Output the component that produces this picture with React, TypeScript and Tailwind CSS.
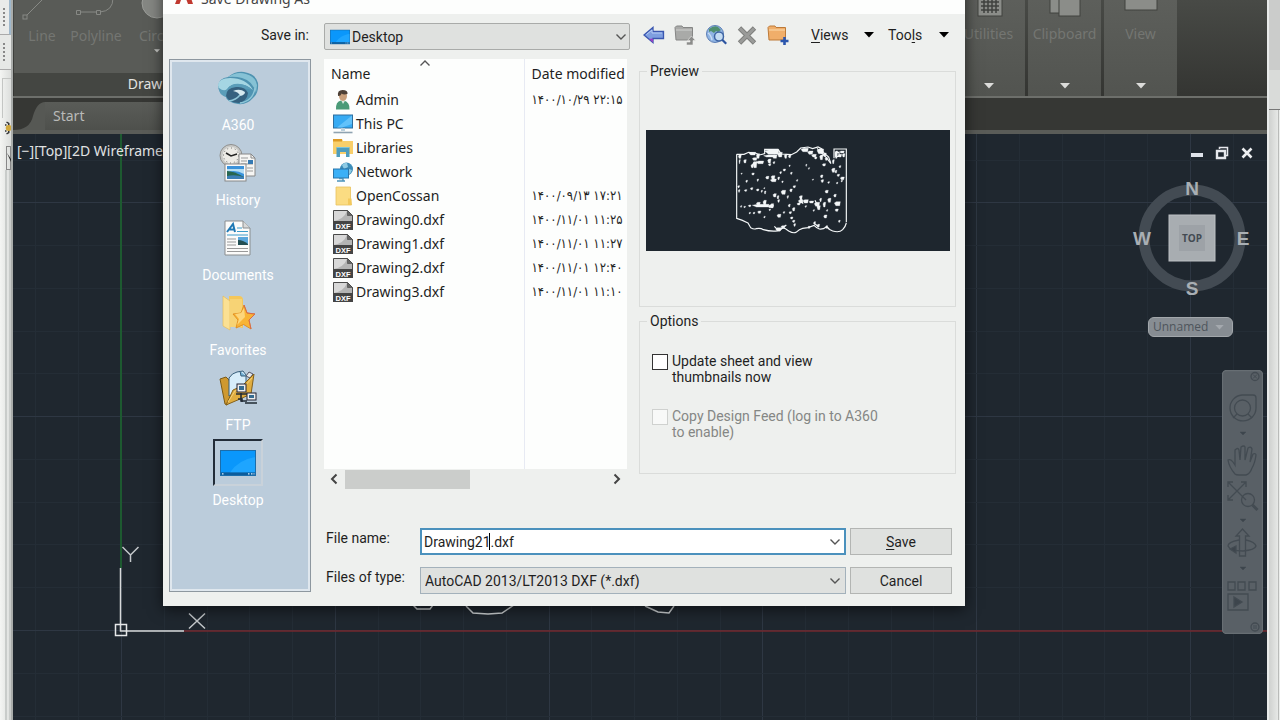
import { useState } from "react";
import type { ReactNode } from "react";

const UI = "font-[Roboto,'Liberation_Sans',sans-serif]";
const SEGOE = "font-['Noto_Sans','Open_Sans',sans-serif]";

/* ---------- small icons ---------- */

const Chevron = ({ className = "" }: { className?: string }) => (
  <svg viewBox="0 0 12 8" className={className} fill="none" stroke="#555" strokeWidth="1.4">
    <path d="M1.5 1.5 6 6l4.5-4.5" />
  </svg>
);

const DownArrow = ({ className = "" }: { className?: string }) => (
  <svg viewBox="0 0 10 6" className={className} fill="currentColor">
    <path d="M0 0h10L5 5.5z" />
  </svg>
);

const DesktopIcon = ({ className = "" }: { className?: string }) => (
  <svg viewBox="0 0 36 26" className={className}>
    <rect width="36" height="26" fill="#1b6dab" />
    <rect x="1" y="1" width="34" height="21.5" fill="#0a97fb" />
    <path d="M35 1v21.500H10Q18 10 35 7z" fill="#1ea5ff" />
    <rect x="1" y="22.500" width="34" height="2.500" fill="#0b5c9c" />
    <path d="M2 23.800h1.500M28 23.800h1.500M31 23.800h1.500M33.500 23.800h1" stroke="#d9f0ff" strokeWidth="1.300" />
  </svg>
);

const BackIcon = () => (
  <svg viewBox="0 0 22 22" className="size-[22px]">
    <path d="M1 11 10 3.500v4h10.500v7H10v4z" fill="#7f9fe0" stroke="#3b57b0" strokeWidth="1.300" />
    <path d="M3.500 10.500 9 6v3h10" fill="none" stroke="#b8cdf5" />
    <path d="m6 15 4 3.500v-4" fill="#9b3fc4" />
  </svg>
);

const UpFolderIcon = () => (
  <svg viewBox="0 0 22 22" className="size-[22px]">
    <path d="M1 3.500 2.500 2H8l1 1.500h9.500V16H2z" fill="#a9aaa8" stroke="#858685" />
    <path d="M2 6h16" stroke="#d0d1cf" />
    <path d="M12.500 21h6.500v-4.500h2.500L17.500 12l-4 4.500H16V18h-3.500z" fill="#8b8c8a" stroke="#efefed" strokeWidth=".6" />
  </svg>
);

const WebIcon = () => (
  <svg viewBox="0 0 22 22" className="size-[22px]">
    <circle cx="10" cy="10" r="8.500" fill="#8fb4e3" stroke="#5d7fb6" />
    <path d="M4 5q5-4 9-2l3 3-3 2-2-1-2 2-3-2-2 1z" fill="#4f8f6f" />
    <path d="M3 9q3 2 4 7" stroke="#c9dcf3" fill="none" strokeWidth="1.500" />
    <circle cx="14" cy="12.500" r="4.500" fill="#c4dcf2" stroke="#3e64a3" strokeWidth="1.500" />
    <path d="m17.200 15.800 4 4" stroke="#2d55a0" strokeWidth="2.200" />
  </svg>
);

const DeleteIcon = () => (
  <svg viewBox="0 0 22 22" className="size-[22px]">
    <path d="m3.500 4 15 15M18.500 4l-15 15" stroke="#7d7e7c" strokeWidth="4.800" />
    <path d="m4 4.500 14 14M18 4.500l-14 14" stroke="#9a9b99" strokeWidth="3" />
  </svg>
);

const NewFolderIcon = () => (
  <svg viewBox="0 0 22 22" className="size-[22px]">
    <path d="M1 3.500 2.500 2H8l1 1.500h9.500V16H2z" fill="#f0ae6a" stroke="#bd7a38" />
    <path d="M2 6h16" stroke="#fbdcae" />
    <path d="M17.500 13v8M13.500 17h8" stroke="#2b56ad" strokeWidth="2.600" />
  </svg>
);

const UserIcon = () => (
  <svg viewBox="0 0 20 20" className="size-5">
    <path d="M3 19.500q-.5-8 5-9h3q6 2 5.500 9z" fill="#4b9b78" />
    <path d="m8 10 2 4 2.500-4z" fill="#d9ebe2" />
    <ellipse cx="10" cy="6" rx="4" ry="5" fill="#c89f7b" />
    <path d="M5 6Q4 0 9.500 0 15 0 14.500 4q-4 1-6-.5Q8 6 5 6z" fill="#4d4036" />
  </svg>
);

const PcIcon = () => (
  <svg viewBox="0 0 20 20" className="size-5">
    <rect x=".5" y="1" width="19" height="13" fill="#37abf3" stroke="#2e6f9f" />
    <path d="M19 1.500V10L9 13.500H4z" fill="#62c2fa" />
    <path d="M8 14h4v3H8z" fill="#bcd0dc" />
    <path d="M.5 18.500h19" stroke="#8fa3b1" strokeWidth="1.600" />
  </svg>
);

const LibraryIcon = () => (
  <svg viewBox="0 0 20 20" className="size-5">
    <path d="M0 1h9l1 2h10v13H0z" fill="#f9cf6a" />
    <path d="M0 1h9v2.500H0z" fill="#dd9a24" />
    <path d="M3.500 19V9.500h13V19H13v-5H7v5z" fill="#4f9dbd" />
    <path d="M3.500 9.500h13" stroke="#7cc4dd" />
  </svg>
);

const NetworkIcon = () => (
  <svg viewBox="0 0 20 20" className="size-5">
    <circle cx="13.500" cy="7" r="6.500" fill="#3c8db8" />
    <path d="M9 3q3-3 5-2l1 4-4 2zM16 7l3 1-2 4-2-1z" fill="#8ecbe4" />
    <rect x=".5" y="7" width="15" height="9" fill="#3bb0f7" stroke="#2a76ac" />
    <path d="M6 16.500h4V19H4M10 19h2" stroke="#4a92bb" fill="none" strokeWidth="1.400" />
  </svg>
);

const FolderIcon = () => (
  <svg viewBox="0 0 20 20" className="size-5">
    <path d="M3 1h14.500v12l1 6H3z" fill="#fbdc82" stroke="#e9c25d" strokeWidth=".8" />
    <path d="M15 12.500h3.500V19H15z" fill="#f3c95c" />
  </svg>
);

const DxfIcon = () => (
  <svg viewBox="0 0 20 20" className="size-5">
    <path d="M.5.5h14l5 5V19.500H.5z" fill="#b4b4b4" stroke="#4a4a4a" />
    <path d="M1 11Q11 9 14 1H1z" fill="#d8d8d8" />
    <path d="M14.500.5v5h5z" fill="#666" stroke="#444" strokeWidth=".6" />
    <rect y="11" width="20" height="9" fill="#444" />
    <text x="10" y="18.500" fontSize="7.500" fontWeight="bold" textAnchor="middle" fill="#fff" fontFamily="Liberation Sans, sans-serif">
      DXF
    </text>
  </svg>
);

/* ---------- places bar icons ---------- */

const A360Icon = () => (
  <svg viewBox="0 0 42 34" className="h-[34px] w-[42px]">
    <path d="M1 15Q2 7 11 6 18 0 27 1q12 2 14 11 1 10-5 15-6 7-15 6-11-1-13-9-7-3-7-9z" fill="#4f93b1" />
    <path d="M11 6q9-6 18-3 10 3 11 11l-1 8Q36 10 25 7q-7-2-14-1z" fill="#86c2d5" />
    <path d="M1 14q1-7 12-7 16 0 23 12-8-7-17-6-9 1-10 9-8-2-8-8z" fill="#a5d6e3" />
    <path d="M2 17q5 4 8 1 5-6 13-5 8 1 12 6-5-2-11-1-12 2-13 9-10-3-9-10z" fill="#5a9db9" />
    <path d="M9 25q0-8 10-9 9-1 12 6-1 8-9 10-10 0-13-7z" fill="#35617f" />
    <path d="M16 20q7-3 12 1 0 3-5 4-1-4-7-5z" fill="#d6e9ef" />
    <path d="M23 32q13-2 15-15M12 30q7-1 11-6" stroke="#8fc6d8" fill="none" strokeWidth="1.500" />
  </svg>
);

const HistoryIcon = () => (
  <svg viewBox="0 0 38 38" className="size-[38px]">
    <circle cx="12" cy="11.500" r="11" fill="#c8c9c7" stroke="#8e8f8d" />
    <circle cx="12" cy="11.500" r="8.500" fill="#ecebe6" />
    <circle cx="12" cy="11.500" r="7.500" fill="none" stroke="#666" strokeDasharray="1 2.900" />
    <path d="m7 9 5 3 6-2" stroke="#222" fill="none" strokeWidth="1.500" />
    <path d="M20 10h12l4 4v18H20z" fill="#f6f6f4" stroke="#888" />
    <path d="M32 10v4h4" fill="none" stroke="#888" />
    <path d="M22 14h7M22 17h6M22 20h12M28 24h6M28 27h6" stroke="#999" />
    <rect x="29" y="16" width="5" height="4" fill="#3479b3" />
    <rect x="6" y="20" width="21" height="17" fill="#fafafa" stroke="#888" />
    <rect x="8" y="22" width="17" height="13" fill="#3a92da" />
    <path d="M8 28q9-3 17 2v-5H8z" fill="#b6def3" />
    <path d="M8 27q7 0 17 6v2H8z" fill="#28664f" />
    <path d="M8 32q8-2 17 1v2H8z" fill="#3d7fb6" />
  </svg>
);

const DocumentsIcon = () => (
  <svg viewBox="0 0 28 36" className="h-9 w-7">
    <path d="M1 1h18l7 7v27H1z" fill="#fbfbfa" stroke="#8a8d8f" />
    <path d="M19 1v7h7" fill="#d8d9d9" stroke="#8a8d8f" />
    <path d="m3 12 6-8 2 8M5.500 9.500H10" fill="none" stroke="#1f78b4" strokeWidth="2" />
    <path d="M13 8h5M13 11.500h11M3 15h21" stroke="#3d9cc9" strokeWidth="1.200" />
    <path d="M3 19h9M3 22h9M3 25h9M3 28.500h21M3 31.500h21" stroke="#999" />
    <rect x="14" y="17" width="10" height="8" fill="#5aa7dc" />
    <path d="M14 20q5 0 10 4v1H14z" fill="#234f53" />
  </svg>
);

const FavoritesIcon = () => (
  <svg viewBox="0 0 34 38" className="h-[38px] w-[34px]">
    <path d="M2 2h16q4 0 4 4v28L8 32V2z" fill="#f5c75a" />
    <path d="m2 2 7 5v29l-7-4z" fill="#fbe093" stroke="#e7b94f" strokeWidth=".6" />
    <path d="M9 5h12v28H9z" fill="#f7d375" />
    <path d="m23 11 3 8 8 1-6 6 2 9-7.500-4.500L15 34l2-8-5-6 8-1z" fill="#f8b435" stroke="#dd8516" strokeWidth=".8" />
    <path d="m23 14 1 9-8 8 2-6-4-5 6-1z" fill="#fdd67b" />
    <path d="M23 11 26 19l8 1-6 6 2 9" fill="none" stroke="#d9694b" strokeWidth="1" />
  </svg>
);

const FtpIcon = () => (
  <svg viewBox="0 0 38 36" className="h-9 w-[38px]">
    <path d="M1 9 7 7l3 3 5 14-7 11-2-1z" fill="#cf9930" stroke="#7b5a18" />
    <path d="M10 8q3-5 8-6l6-1 3 4v14l-17 7z" fill="#d7edfa" stroke="#365e7a" />
    <path d="m21 1 1 5h5" fill="#74b1d6" stroke="#365e7a" />
    <path d="m27 6 3-4 4 2-3 4z" fill="#e3e7e7" stroke="#556" />
    <path d="m7 35 7-15 9-4 12-12-3 20-11 5z" fill="#e0ad40" stroke="#84601a" />
    <path d="m9 32 7-11 9-4 8-9" stroke="#f4d07a" fill="none" />
    <rect x="18" y="14" width="9" height="8" fill="#eee" stroke="#223" />
    <rect x="20" y="16" width="5" height="4" fill="#356b91" />
    <rect x="28" y="23" width="9" height="7" fill="#eee" stroke="#223" />
    <rect x="30" y="25" width="5" height="3" fill="#356b91" />
    <path d="M22 23v8h6M17 24h11M26 33h12M19 29h4v3" stroke="#222b35" fill="none" strokeWidth="1.600" />
  </svg>
);

/* ---------- data ---------- */

const places: { label: string; icon: ReactNode }[] = [
  { label: "A360", icon: <A360Icon /> },
  { label: "History", icon: <HistoryIcon /> },
  { label: "Documents", icon: <DocumentsIcon /> },
  { label: "Favorites", icon: <FavoritesIcon /> },
  { label: "FTP", icon: <FtpIcon /> },
  { label: "Desktop", icon: <DesktopIcon className="h-[26px] w-9" /> },
];

const files: { name: string; date: string; icon: ReactNode }[] = [
  { name: "Admin", date: "۱۴۰۰/۱۰/۲۹ ۲۲:۱۵", icon: <UserIcon /> },
  { name: "This PC", date: "", icon: <PcIcon /> },
  { name: "Libraries", date: "", icon: <LibraryIcon /> },
  { name: "Network", date: "", icon: <NetworkIcon /> },
  { name: "OpenCossan", date: "۱۴۰۰/۰۹/۱۳ ۱۷:۲۱", icon: <FolderIcon /> },
  { name: "Drawing0.dxf", date: "۱۴۰۰/۱۱/۰۱ ۱۱:۲۵", icon: <DxfIcon /> },
  { name: "Drawing1.dxf", date: "۱۴۰۰/۱۱/۰۱ ۱۱:۲۷", icon: <DxfIcon /> },
  { name: "Drawing2.dxf", date: "۱۴۰۰/۱۱/۰۱ ۱۲:۴۰", icon: <DxfIcon /> },
  { name: "Drawing3.dxf", date: "۱۴۰۰/۱۱/۰۱ ۱۱:۱۰", icon: <DxfIcon /> },
];

// x, y, width, height of the loose fragments in the thumbnail
const specks = [
  [296, 104, 9, 10], [298, 118, 4, 12], [312, 118, 8, 10], [328, 96, 20, 8], [350, 100, 10, 14], [338, 112, 14, 8],
  [340, 124, 12, 18], [350, 122, 22, 8], [334, 132, 8, 10], [376, 88, 42, 14], [372, 104, 34, 6], [384, 116, 10, 12],
  [398, 104, 14, 10], [386, 130, 8, 6], [400, 124, 6, 6], [414, 96, 14, 14], [434, 102, 8, 12], [446, 104, 8, 8],
  [484, 84, 22, 10], [504, 92, 16, 10], [516, 102, 14, 8], [532, 86, 20, 14], [540, 104, 10, 14], [550, 98, 10, 10],
  [556, 112, 8, 8], [548, 130, 10, 7], [524, 110, 8, 6], [586, 92, 8, 22], [600, 92, 14, 6], [596, 102, 10, 8],
  [608, 100, 8, 10], [578, 118, 6, 12], [576, 144, 10, 12], [586, 150, 6, 8], [598, 136, 6, 6], [602, 170, 12, 8],
  [592, 162, 8, 6], [336, 158, 8, 6], [352, 176, 5, 7], [378, 168, 10, 8], [394, 166, 12, 10], [392, 176, 18, 8],
  [414, 170, 6, 8], [420, 154, 6, 6], [430, 146, 8, 6], [452, 156, 6, 6], [448, 134, 4, 5], [498, 132, 4, 6],
  [506, 142, 4, 5], [426, 182, 5, 5], [470, 178, 5, 5], [518, 176, 4, 4], [542, 164, 8, 8], [544, 178, 8, 8],
  [564, 184, 6, 5], [590, 186, 5, 5], [604, 180, 5, 5], [304, 158, 4, 4], [318, 180, 6, 6], [294, 196, 6, 6],
  [296, 208, 5, 8], [314, 208, 8, 5], [332, 202, 8, 6], [350, 206, 8, 6], [364, 210, 5, 6], [374, 212, 5, 9],
  [460, 196, 8, 6], [450, 206, 8, 8], [424, 210, 14, 12], [400, 220, 10, 10], [412, 226, 6, 10], [442, 226, 5, 8],
  [372, 202, 4, 4], [480, 226, 8, 12], [476, 238, 14, 10], [490, 238, 16, 10], [508, 242, 14, 6], [472, 248, 10, 6],
  [524, 246, 16, 12], [532, 256, 10, 12], [540, 234, 6, 10], [550, 246, 8, 14], [556, 210, 10, 8], [564, 234, 10, 12],
  [582, 222, 8, 8], [584, 244, 18, 12], [586, 266, 10, 7], [338, 252, 50, 8], [350, 246, 12, 8], [370, 240, 10, 14],
  [384, 254, 18, 8], [392, 250, 10, 12], [302, 256, 5, 5], [312, 258, 6, 4], [326, 254, 8, 5], [354, 272, 10, 7],
  [340, 276, 6, 5], [372, 288, 5, 5], [388, 266, 5, 5], [328, 276, 5, 5], [414, 238, 6, 8], [412, 282, 12, 9],
  [446, 252, 6, 8], [458, 262, 8, 10], [448, 274, 8, 6], [430, 274, 6, 5], [452, 290, 8, 6], [458, 300, 8, 6],
  [462, 310, 6, 8], [552, 284, 10, 9], [560, 268, 5, 5], [596, 300, 6, 6], [522, 304, 6, 8], [532, 312, 8, 8],
  [504, 318, 8, 6], [408, 322, 16, 10], [424, 316, 12, 8], [558, 316, 6, 8], [520, 268, 5, 5], [496, 256, 5, 5],
];

const Thumbnail = () => (
  <svg viewBox="19 29 912 363" className="w-full bg-[#1e262e]" fill="none" stroke="#f4f7f8" strokeWidth="3.500">
    <path d="M291 102h22l14-6 20 2 12 6 16-4v-13h40l10 14 30 2 16-8 12-12 22-3 14 5 16-5 12 6 4 10 16 14 6 18M583 114V86h37v220" />
    <path d="M291 102v192q14 4 34 14l8 14q10 6 16 3 14-3 22 3 20 6 42 4l16-10q8 2 18 10 14 8 22 4 10-10 20-12l16-2 18-7q8 8 16 11 10 2 22-7 8 10 18 13 20 6 30-4 8-8 11-20" />
    <path d="m404 318 14 14 22-18M522 308l16 12M560 318l8 8M374 92h36M344 124l-8 16M532 84l18 18 10 10 14 18M480 228l10 22M526 240l12 26M588 96h10v12h-10z" />
    {specks.map(([x, y, w, h], i) => (
      <path
        key={i}
        strokeWidth="1"
        fill="#f4f7f8"
        d={`M${x} ${y + h / 3}L${x + w / 3} ${y}H${x + w}L${x + w - 2} ${y + h}H${x + w / 4}z`}
      />
    ))}
  </svg>
);

/* ---------- drawing area ---------- */

const ModelSpace = () => (
  <svg className="absolute inset-0 size-full" fill="none">
    <g transform="translate(-13 -134)">
      {Array.from({ length: 31 }, (_, i) => {
        const x = Math.round(121 + (i - 2) * 42.76) + 0.5;
        const major = (i - 2) % 5 === 0;
        return <path key={`v${i}`} d={`M${x} 134V900`} stroke={major ? "#2e3743" : "#242d36"} />;
      })}
      {Array.from({ length: 18 }, (_, i) => {
        const y = Math.round(630 + (i - 11) * 42.76) + 0.5;
        const major = (i - 11) % 5 === 0;
        return <path key={`h${i}`} d={`M13 ${y}H1900`} stroke={major ? "#2e3743" : "#242d36"} />;
      })}
      <path d="M121 134v434" stroke="#1d5a30" strokeWidth="2" />
      <path d="M184 631h1700" stroke="#73282e" strokeWidth="1.500" />
      <path d="M120.500 568v63H184" stroke="#d8dadb" strokeWidth="1.500" />
      <rect x="115.500" y="624.500" width="11" height="11" stroke="#e6e8e9" strokeWidth="1.500" />
      <path d="m122.500 547 8 8 8-8M130.500 555v7M189 613.500l16 15M205 613.500l-16 15" stroke="#c4c8cb" strokeWidth="1.500" />
      <path d="M413 605l4 4h13l3-4M466 606l7 7 15 1 14-1 12-8M645 606l13 6 11 1 5-7" stroke="#cfd3d5" strokeWidth="1.500" />
    </g>
  </svg>
);

const ViewCube = () => (
  <svg viewBox="0 0 120 126" className="h-[126px] w-[120px]" fontFamily="Liberation Sans, sans-serif" fontWeight="bold" textAnchor="middle">
    <circle cx="60" cy="63" r="48" fill="none" stroke="#434b53" strokeWidth="11" />
    <rect x="37" y="40" width="46" height="46" fill="#a8adb1" stroke="#bcc0c3" />
    <rect x="47" y="50" width="26" height="26" fill="#9da2a7" />
    <text x="60" y="67" fontSize="10" fill="#434a52" fontFamily="Open Sans, sans-serif">TOP</text>
    <g fontSize="19" fill="#a9afb4">
      <text x="60" y="20">N</text>
      <text x="60" y="120">S</text>
      <text x="10" y="70">W</text>
      <text x="111" y="70">E</text>
    </g>
  </svg>
);

const NavigationBar = () => (
  <svg viewBox="0 0 41 264" className="h-[264px] w-[41px]" fill="none" stroke="#434b52" strokeWidth="1.300">
    <rect x=".5" y=".5" width="40" height="263" rx="4" fill="#596066" stroke="#676e73" />
    <circle cx="33" cy="6.500" r="4" />
    <path d="m31 4.500 4 4m0-4-4 4" strokeWidth="1" />
    <path d="M20 25h11q3 0 3 3v10a13 13 0 1 1-14-13z" />
    <circle cx="20.500" cy="38" r="8" />
    <path d="m11 48 4-4M30 48l-4-4" />
    <path d="M18 62h6l-3 3zM18 149h6l-3 3zM18 197h6l-3 3z" fill="#3d454c" strokeWidth=".5" />
    <path d="M13 104Q7 97 6 90q3-2 7 5V80q3-3 4 0l1 10 1-13q3-2 4 0v13l3-12q3-2 4 1l-2 13 3-8q3-1 3 1-1 8-4 13-2 6-6 7h-7q-3 0-4-1z" />
    <path d="m6 112 18 18M24 112 6 130M6 117v-5h5M19 112h5v5M6 125v5h5" />
    <circle cx="26" cy="130" r="6.500" />
    <path d="m30.500 135 5 5" strokeWidth="3" />
    <path d="M17.500 186v-20H14l6.500-7 6.500 7h-3.500v20z" />
    <path d="M17 170q-11 2-11 6 2 5 15 5 12-1 13-5-1-4-10-6" />
    <path d="m8 179 6-3v7z" fill="#3d454c" />
    <path d="M6 212h7v8H6zM16 212h7v8h-7zM27 212h7v8h-7zM6 224h20v16H6z" />
    <path d="m12 227 8 5-8 5z" fill="#3d454c" />
    <circle cx="33" cy="257" r="4" />
    <path d="M31 256h4M31 258h4" strokeWidth="1" />
  </svg>
);

/* ---------- ribbon ---------- */

const RibbonPanel = ({ label, children }: { label: string; children: ReactNode }) => (
  <button className="flex w-[73px] flex-col items-center overflow-hidden bg-linear-to-b from-[#5d5f5b] to-[#525450] text-[#747672]">
    <svg viewBox="0 0 40 24" className="h-6 w-10" fill="#8b8d89" stroke="#40423f">
      {children}
    </svg>
    <span className={`${SEGOE} text-sm leading-5`}>{label}</span>
    <DownArrow className="mt-auto mb-[7px] h-[6px] w-[10px] text-[#dcdcda]" />
  </button>
);

const Ribbon = () => (
  <div className="flex h-[98px] shrink-0 gap-[3px] border-b-2 border-[#6d6f6b] bg-linear-to-b from-[#484a46] to-[#343532] pl-px">
    <div className="flex w-[262px] flex-col bg-[#595b57] text-[#747672]">
      <div className="flex grow pl-2">
        <button className="flex w-10 flex-col items-center">
          <svg viewBox="0 0 40 26" className="h-[26px] w-10" fill="none" stroke="#878985">
            <path d="M4 16 22-2" />
            <rect x="1" y="15" width="4" height="4" fill="#595b57" />
          </svg>
          <span className={`${SEGOE} text-sm leading-5`}>Line</span>
        </button>
        <button className="flex w-[68px] flex-col items-center">
          <svg viewBox="0 0 68 26" className="h-[26px] w-[68px]" fill="none" stroke="#878985">
            <path d="M16 12h22q13-1 13-14" />
            <path d="M14.500 10.500h4v4h-4zM34.500 10.500h4v4h-4z" fill="#595b57" />
          </svg>
          <span className={`${SEGOE} text-sm leading-5`}>Polyline</span>
        </button>
        <button className="flex w-[54px] flex-col items-center">
          <svg viewBox="0 0 54 26" className="h-[26px] w-[54px]" fill="#858783" stroke="#9b9d99">
            <circle cx="27" cy="3" r="15" />
          </svg>
          <span className={`${SEGOE} text-sm leading-5`}>Circle</span>
          <DownArrow className="mt-[3px] h-1 w-[6px] text-[#c4c5c2]" />
        </button>
      </div>
      <div className={`${SEGOE} h-[23px] bg-[#444642] text-center text-sm leading-[22px] text-[#e3e3e1]`}>Draw</div>
    </div>
    <div className="grow bg-[#595b57]" />
    <RibbonPanel label="Utilities">
      <rect x="9" y="-6" width="24" height="22" />
      <path d="M12 2h18M12 6h18M12 10h18M15 0v13M19 0v13M23 0v13M27 0v13" strokeWidth="1.500" />
    </RibbonPanel>
    <RibbonPanel label="Clipboard">
      <rect x="5" y="-6" width="14" height="19" />
      <rect x="14" y="-6" width="21" height="22" />
    </RibbonPanel>
    <RibbonPanel label="View">
      <rect x="4" y="-6" width="32" height="16" />
    </RibbonPanel>
    <div className="w-[87px]" />
  </div>
);

const DocumentTabs = () => (
  <div className="flex h-9 shrink-0 items-end border-b-4 border-[#5a5c58] bg-[#363734]">
    <svg viewBox="0 0 32 28" className="h-7 w-8">
      <path d="M0 28Q17 28 20 14 24 0 32 0v28z" fill="#565854" />
    </svg>
    <button className={`${SEGOE} h-7 w-[400px] rounded-tr-lg bg-linear-to-b from-[#5a5c58] to-[#4e504c] pl-2 text-left text-sm text-[#b9bab8]`}>
      Start
    </button>
  </div>
);

/* ---------- save dialog ---------- */

const SaveDialog = () => {
  const [fileName, setFileName] = useState("Drawing21.dxf");
  const [update, setUpdate] = useState(false);

  return (
    <div
      role="dialog"
      aria-labelledby="dialog-title"
      className={`${UI} absolute -top-6 left-[163px] flex w-[802px] flex-col bg-[#eef0ee] pb-3 text-sm text-[#1f1f1f] shadow-[0_3px_14px_rgba(0,0,0,0.6)]`}
    >
      <div className="flex h-[38px] items-center gap-2 bg-[#fdfefd] px-3">
        <svg viewBox="0 0 18 18" className="size-[18px]">
          <path d="M0 18 7 0h5l6 18h-5l-1.500-4H6l-1.500 4z" fill="#c0392f" />
        </svg>
        <span id="dialog-title" className={`${SEGOE} grow pt-2 text-sm text-[#444]`}>
          Save Drawing As
        </span>
        <button aria-label="Close">
          <svg viewBox="0 0 12 12" className="size-3" stroke="#888">
            <path d="m1 1 10 10M11 1 1 11" />
          </svg>
        </button>
      </div>

      {/* Look-in row */}
      <div className="flex items-start pt-[9px] pr-4 pl-[98px] leading-6">
        <label htmlFor="save-in" className="w-[63px]">Save in:</label>
        <div className="relative w-[306px]">
          <select
            id="save-in"
            className="h-[27px] w-full appearance-none rounded-xs border border-[#a9aba9] bg-[#dfe1df] pl-[27px]"
          >
            <option>Desktop</option>
          </select>
          <DesktopIcon className="pointer-events-none absolute top-[6px] left-[6px] h-4 w-5" />
          <Chevron className="pointer-events-none absolute top-[10px] right-[3px] h-2 w-3" />
        </div>
        <div className="ml-[13px] flex h-6 items-center gap-[9px]">
          <button aria-label="Back"><BackIcon /></button>
          <button aria-label="Up one level"><UpFolderIcon /></button>
          <button aria-label="Search the Web"><WebIcon /></button>
          <button aria-label="Delete"><DeleteIcon /></button>
          <button aria-label="Create New Folder"><NewFolderIcon /></button>
        </div>
        <button className="ml-[22px] flex grow items-center justify-between">
          <span><u className="underline-offset-2">V</u>iews</span>
          <DownArrow className="h-[6px] w-[10px] text-black" />
        </button>
        <button className="ml-[14px] flex w-[61px] items-center justify-between">
          <span>Too<u className="underline-offset-2">l</u>s</span>
          <DownArrow className="h-[6px] w-[10px] text-black" />
        </button>
      </div>

      <div className="flex gap-[13px] px-[6px] pt-[9px] pr-[9px]">
        {/* Places */}
        <nav className="mb-[2px] flex w-[142px] shrink-0 flex-col border border-[#8d979f] bg-[#bbccdb] pt-1 outline-2 -outline-offset-3 outline-[#dfe7ee]">
          {places.map((p) => (
            <button key={p.label} className="flex h-[75px] flex-col items-center pr-1 text-white">
              <span
                className={
                  p.label === "Desktop"
                    ? "flex h-[50px] w-[50px] items-center justify-center border-2 border-t-[#222c38] border-r-[#c9d2da] border-b-[#c9d2da] border-l-[#222c38]"
                    : "flex h-[50px] items-center"
                }
              >
                {p.icon}
              </span>
              <span className="leading-7">{p.label}</span>
            </button>
          ))}
        </nav>

        <div className="flex min-w-0 grow flex-col gap-[39px]">
          <div className="flex gap-3">
            {/* File list */}
            <div className="flex w-[303px] shrink-0 flex-col">
              <div className="relative h-[410px] overflow-hidden bg-[#fdfefd]">
                <table className={`${SEGOE} w-[420px] table-fixed text-left`}>
                  <thead>
                    <tr className="h-[29px]">
                      <th className="w-[200px] border-r border-[#e7eaf3] pl-[7px] font-normal">Name</th>
                      <th className="pl-[7px] font-normal">Date modified</th>
                    </tr>
                  </thead>
                  <tbody>
                    {files.map((f) => (
                      <tr key={f.name} className="h-6">
                        <td className="border-r border-[#e7eaf3] p-0 pl-[9px]">
                          <span className="flex h-6 items-center gap-[3px] leading-6">
                            {f.icon}
                            {f.name}
                          </span>
                        </td>
                        <td className="p-0 pl-[7px] font-['DejaVu_Sans_Condensed','DejaVu_Sans',sans-serif] text-[13px]">
                          {f.date}
                        </td>
                      </tr>
                    ))}
                    <tr className="h-[170px]">
                      <td className="border-r border-[#e7eaf3]" />
                      <td />
                    </tr>
                  </tbody>
                </table>
                <Chevron className="absolute top-0 left-[95px] h-2 w-3 rotate-180" />
              </div>
              <div className="flex h-5 items-center">
                <button aria-label="Scroll left" className="flex w-5 justify-center">
                  <svg viewBox="0 0 8 12" className="h-3 w-2" fill="none" stroke="#444" strokeWidth="2">
                    <path d="M6.500 1.500 2 6l4.500 4.500" />
                  </svg>
                </button>
                <div className="ml-px h-[19px] w-[125px] bg-[#cbcdcb]" />
                <button aria-label="Scroll right" className="ml-auto flex w-[21px] justify-center">
                  <svg viewBox="0 0 8 12" className="h-3 w-2" fill="none" stroke="#444" strokeWidth="2">
                    <path d="M1.500 1.500 6 6l-4.500 4.500" />
                  </svg>
                </button>
              </div>
            </div>

            {/* Preview and options */}
            <div className="flex min-w-0 grow flex-col gap-1 pt-[2px]">
              <fieldset className="h-[246px] border border-[#dadcda] pt-[49px] pr-[5px] pl-[6px]">
                <legend className="ml-px px-[3px] leading-5">Preview</legend>
                <Thumbnail />
              </fieldset>
              <fieldset className="h-[163px] border border-[#dadcda] px-3">
                <legend className="-ml-[5px] px-[3px] leading-5">Options</legend>
                <label className="mt-[22px] flex gap-1 leading-4">
                  <input
                    type="checkbox"
                    checked={update}
                    onChange={(e) => setUpdate(e.target.checked)}
                    className="mt-px size-4 shrink-0 appearance-none border border-[#333] bg-white checked:bg-[#3a7fb5]"
                  />
                  <span className="w-[150px]">Update sheet and view thumbnails now</span>
                </label>
                <label className="mt-[23px] flex gap-1 leading-4 text-[#858785]">
                  <input
                    type="checkbox"
                    disabled
                    className="mt-px size-4 shrink-0 appearance-none border border-[#cfd1cf] bg-[#f8f9f8]"
                  />
                  <span className="w-[210px]">Copy Design Feed (log in to A360 to enable)</span>
                </label>
              </fieldset>
            </div>
          </div>

          {/* File name and type */}
          <div className="grid grid-cols-[96px_426px_102px] gap-y-3">
            <label htmlFor="file-name" className="pl-[2px] leading-5">File name:</label>
            <div className="relative">
              <input
                id="file-name"
                value={fileName}
                onChange={(e) => setFileName(e.target.value)}
                className="h-[27px] w-full border-2 border-[#4b91bd] bg-white px-[2px] outline-none"
              />
              <span className="absolute top-[5px] left-[69px] h-[17px] w-px bg-black" />
              <Chevron className="absolute top-[10px] right-[5px] h-2 w-3" />
            </div>
            <button className="ml-1 h-[27px] w-[102px] border border-[#b3b5b3] bg-[#dfe1df]">
              <u className="underline-offset-2">S</u>ave
            </button>
            <label htmlFor="file-type" className="pl-[2px] leading-5">Files of type:</label>
            <div className="relative">
              <select
                id="file-type"
                className="h-[27px] w-full appearance-none border border-[#a3b1bb] bg-[#dfe1df] pl-1"
              >
                <option>AutoCAD 2013/LT2013 DXF (*.dxf)</option>
              </select>
              <Chevron className="pointer-events-none absolute top-[10px] right-[5px] h-2 w-3" />
            </div>
            <button className="ml-1 h-[27px] w-[102px] border border-[#b3b5b3] bg-[#dfe1df]">Cancel</button>
          </div>
        </div>
      </div>
    </div>
  );
};

const App = () => (
  <div className="relative flex h-screen overflow-hidden bg-[#1f272f]">
    {/* Edge of the window underneath */}
    <div className="flex w-[13px] shrink-0 flex-col border-r-2 border-[#a9acaa] bg-linear-to-r from-[#f4f5f3] to-[#dcdedc]">
      <div className="flex h-[35px] items-center border-r-2 border-b border-[#9fb8cc] border-b-[#aaa] bg-[#e9ebea] pl-[3px]">
        <span className="h-[18px] border-l-2 border-dotted border-[#888]" />
      </div>
      <div className="flex h-[35px] items-center border-b border-[#aaa] bg-[#e6e8e6] pl-[3px]">
        <span className="h-[18px] border-l-2 border-dotted border-[#888]" />
      </div>
      <div className="mt-2 ml-[2px] h-10 border-t border-l border-[#c4c6c4]" />
      <svg viewBox="0 0 8 20" className="ml-[5px] h-5 w-[6px]">
        <path d="M2 2l3 2v12l-3 2M0 6h2M0 14h2" stroke="#333" strokeWidth="2" fill="none" />
        <circle cx="5" cy="10" r="4" fill="#d2a93c" />
      </svg>
      <div className="mt-2 ml-[6px] h-6 border border-[#888]">
        <svg viewBox="0 0 4 12" className="mt-1 h-3 w-1">
          <path d="m0 2 4 6v3z" fill="#222" />
        </svg>
      </div>
      <div className="ml-[5px] grow border-x-2 border-[#c9ccca]" />
    </div>

    <main className="flex min-w-0 grow flex-col">
      <Ribbon />
      <DocumentTabs />
      <div className="relative grow overflow-hidden">
        <ModelSpace />
        <div className={`${SEGOE} absolute top-[7px] left-1 text-sm text-[#e0e2e3]`}>[−][Top][2D Wireframe]</div>
        <div className="absolute top-3 right-[13px] flex gap-[11px]">
          <button aria-label="Minimize">
            <svg viewBox="0 0 14 14" className="size-[14px]"><path d="M1 7h12v4H1z" fill="#dfe3ea" /></svg>
          </button>
          <button aria-label="Restore">
            <svg viewBox="0 0 14 14" className="size-[14px]" fill="none" stroke="#e6e8ec">
              <path d="M4.500 3V1.500h8v8H11" strokeWidth="1.500" />
              <path d="M2 5h8v7H2z" strokeWidth="2.400" />
            </svg>
          </button>
          <button aria-label="Close drawing">
            <svg viewBox="0 0 14 14" className="size-[14px]" stroke="#eceef0" strokeWidth="2.600">
              <path d="m2.500 2.500 9 9M11.500 2.500l-9 9" />
            </svg>
          </button>
        </div>
        <div className="absolute top-[41px] right-[15px]"><ViewCube /></div>
        <button className="absolute top-[183px] right-[34px] flex h-5 w-[85px] items-center justify-between rounded-md border border-[#a2a7ab] bg-[#878d93] px-1 font-['Open_Sans',sans-serif] text-xs text-[#4e555c]">
          Unnamed
          <DownArrow className="mr-1 h-[5px] w-[9px] text-[#a4a9ae]" />
        </button>
        <div className="absolute top-[236px] right-1"><NavigationBar /></div>
      </div>
    </main>

    <div className="flex w-[13px] shrink-0 flex-col border-l-2 border-[#e9ebea] bg-linear-to-r from-[#cfd1cf] to-[#eceeec]">
      <div className="h-[70px] bg-[#cbcccb]" />
      <div className="h-10 border-b border-[#777] bg-[#d9dbd9]" />
      <div className="mr-px grow border-r border-[#b9bbb9]" />
    </div>

    <SaveDialog />
  </div>
);

export default App;
